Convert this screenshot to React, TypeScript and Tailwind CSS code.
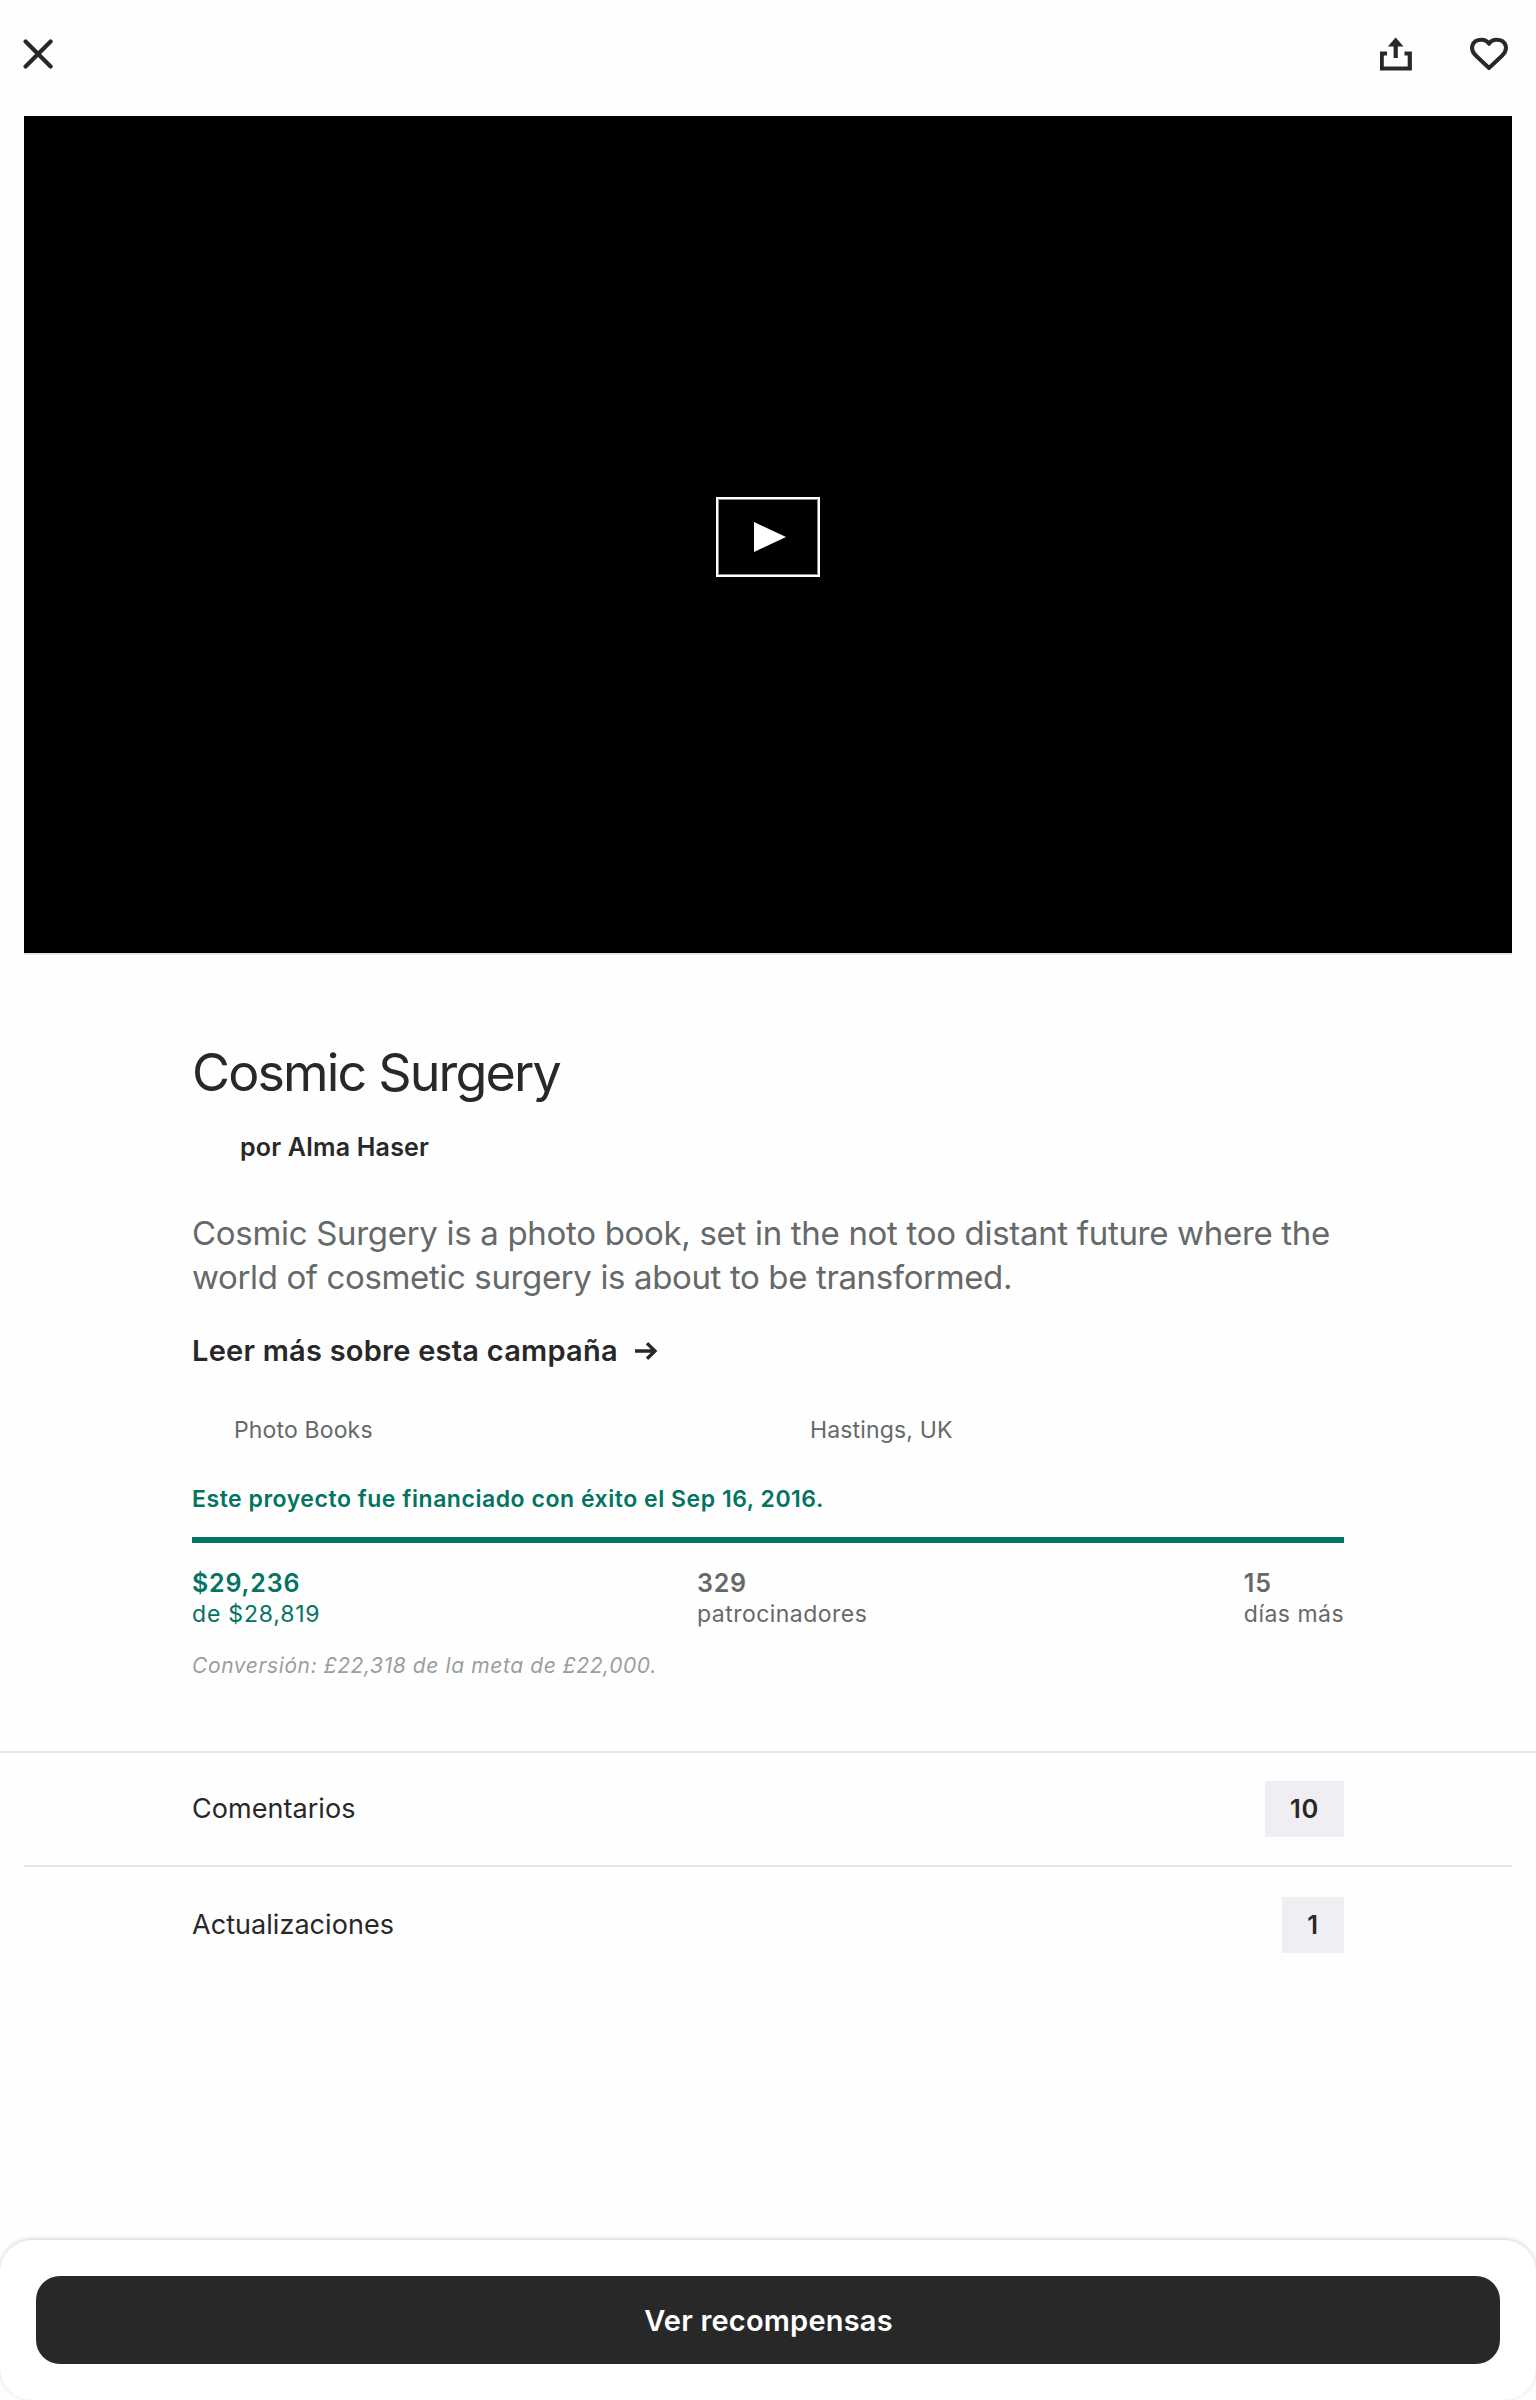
import React from "react";

function Count({ value, width }: { value: string; width: string }) {
  return <span className={`${width} flex h-14 items-center justify-center bg-[#efeef3] pt-px text-[25.500px] font-semibold tracking-[0.8px]`}>{value}</span>;
}

export default function App() {
  return (
    <div className="flex h-[2400px] w-[1536px] flex-col overflow-hidden bg-[#fefefe] font-['Inter',sans-serif] text-[#282828]">
      <header className="flex h-[116px] shrink-0 items-start justify-between pl-[23px] pr-7 pt-[37px]">
        <svg className="mt-[2px]" width="30" height="30" viewBox="0 0 30 30" fill="none" stroke="#282828" strokeWidth="4.2" strokeLinecap="round"><path d="M2.600 2.600 27.600 27.600M27.600 2.600 2.600 27.600" /></svg>
        <div className="flex gap-[57px]">
          <svg width="33" height="34" viewBox="0 0 33 34" fill="none" stroke="#282828" strokeWidth="4.2"><path d="M7 16.500H1.700V31.500H29.800V16.500H24.500M15.700 21V7" /><path d="M15.700 .5 23.500 9.500H7.900Z" fill="#282828" stroke="none" /></svg>
          <svg width="38" height="34" viewBox="0 0 38 34" fill="none" stroke="#282828" strokeWidth="4" strokeLinejoin="round"><path d="M19 31 6 18.800C-.8 12.500 1.500 2.700 11.500 2.700C15 2.700 17.500 4.300 19 6.800C20.500 4.300 23 2.700 26.500 2.700C36.500 2.700 38.800 12.500 32 18.800Z" /></svg>
        </div>
      </header>
      <div className="mx-6 flex h-[839px] shrink-0 items-center justify-center border-b-2 border-[#e6e6e6] bg-black pt-[5px]">
        <div className="flex h-[80px] w-[104px] items-center justify-center border-2 border-white pl-[3px] shadow-[inset_0_0_0_1px_#8a8a8a]">
          <svg width="32" height="30" viewBox="0 0 32 30" fill="white"><path d="M0 0 32 15 0 30Z" /></svg>
        </div>
      </div>
      <main className="h-[796px] shrink-0 px-[192px] pt-[82px]">
        <h1 className="text-[52px] leading-[72px] tracking-[-1.85px]">Cosmic Surgery</h1>
        <p className="ml-[48px] mt-[22px] text-[25px] font-semibold leading-[32px] tracking-[0.2px]">por Alma Haser</p>
        <p className="mt-[48px] whitespace-nowrap text-[33px] leading-[44px] tracking-[-0.31px] text-[#656969]">Cosmic Surgery is a photo book, set in the not too distant future where the<br /><span className="tracking-[-0.37px]">world of cosmetic surgery is about to be transformed.</span></p>
        <div className="mt-[32px] flex items-center gap-[17px] text-[29px] font-semibold leading-[40px] tracking-[0.24px]">Leer más sobre esta campaña
          <svg width="23" height="18" viewBox="0 0 23 18" fill="none" stroke="#282828" strokeWidth="3.3"><path d="M0 9H20M12 1.200 20 9 12 16.800" /></svg>
        </div>
        <div className="mt-[44px] flex text-[23px] leading-[30px] tracking-[0.15px] text-[#656969]"><span className="ml-[42px] w-[576px]">Photo Books</span><span>Hastings, UK</span></div>
        <p className="mt-[39px] text-[23px] font-semibold leading-[30px] tracking-[0.54px] text-[#037362]">Este proyecto fue financiado con éxito el Sep 16, 2016.</p>
        <div className="mt-[23px] h-[6px] bg-[#037362]" />
        <div className="mt-[25px] flex justify-between text-[23px] leading-[31px] tracking-[0.47px] text-[#656969]">
          <div className="tracking-[0.8px] text-[#037362]"><b className="block text-[25px] font-semibold">$29,236</b>de $28,819</div>
          <div><b className="block text-[25px] font-semibold tracking-[0.8px]">329</b>patrocinadores</div>
          <div><b className="block text-[25px] font-semibold tracking-[0.8px]">15</b>días más</div>
        </div>
        <p className="mt-[22px] text-[21px] italic leading-[28px] tracking-[0.6px] text-[#9b9e9e]">Conversión: £22,318 de la meta de £22,000.</p>
      </main>
      <section className="shrink-0 border-t-2 border-[#e6e6e6] px-6 text-[27px] tracking-[0.05px]">
        <div className="flex h-[114px] items-center justify-between border-b-2 border-[#e6e6e6] px-[168px]"><span className="pt-px">Comentarios</span><Count value="10" width="w-[79px]" /></div>
        <div className="flex h-[116px] items-center justify-between px-[168px]"><span className="pt-px">Actualizaciones</span><Count value="1" width="w-[62px]" /></div>
      </section>
      <footer className="mt-auto flex h-[160px] shrink-0 items-start rounded-[32px] bg-white px-9 pt-9 shadow-[0_-1px_4px_rgba(0,0,0,0.18)]">
        <button className="h-[88px] w-full rounded-[24px] bg-[#282828] pl-px pt-px text-[29px] font-semibold tracking-[0.2px] text-white">Ver recompensas</button>
      </footer>
    </div>
  );
}
